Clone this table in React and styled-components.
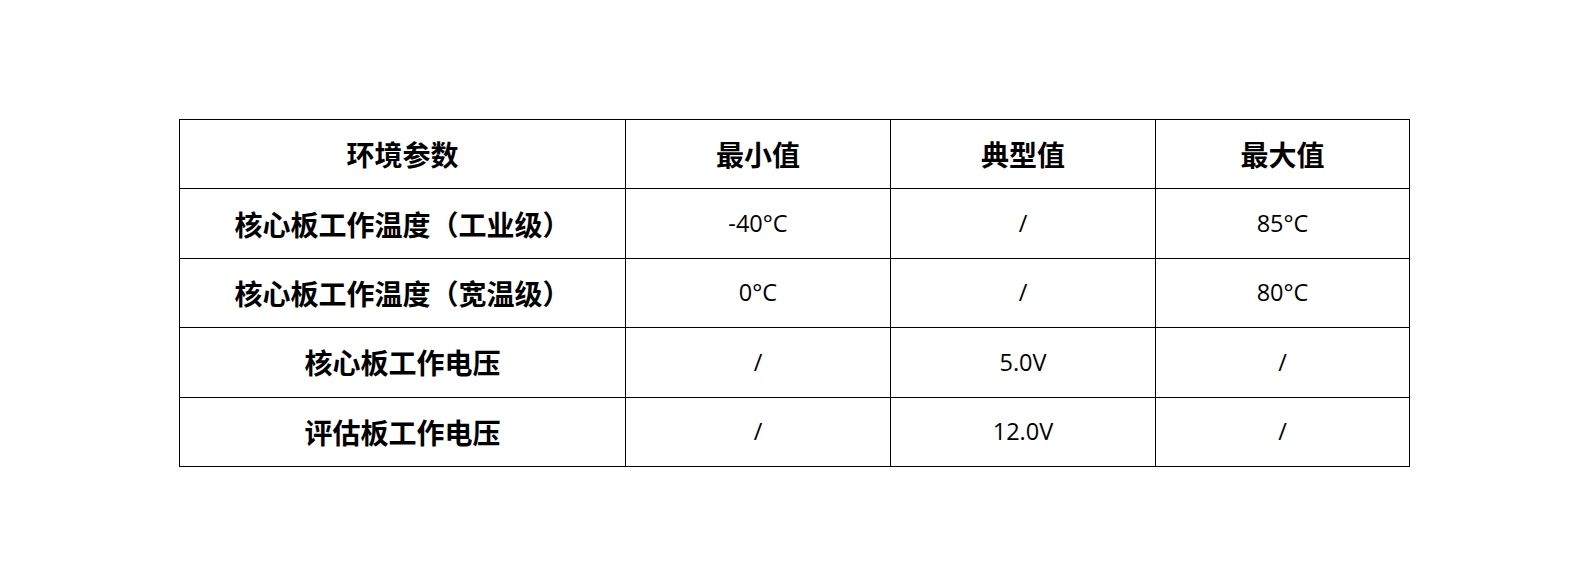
import React from 'react';
import styled, { createGlobalStyle } from 'styled-components';

const GlobalStyle = createGlobalStyle`
  html, body {
    margin: 0;
    padding: 0;
    background: #ffffff;
  }
`;

const Page = styled.div`
  width: 1587px;
  height: 586px;
  padding: 119px 0 0 179px;
  box-sizing: border-box;
  background: #ffffff;
`;

const Table = styled.table`
  border-collapse: collapse;
  table-layout: fixed;
  width: 1230px;
  color: #000;
`;

const Row = styled.tr`
  height: 69.4px;
`;

const Cell = styled.td`
  border: 1px solid #000;
  padding: 0;
  text-align: center;
  vertical-align: middle;
  font-family: ${(p) =>
    p.$cjk
      ? '"Noto Sans CJK SC", "Noto Sans", sans-serif'
      : '"Open Sans", "Liberation Sans", sans-serif'};
  font-size: ${(p) => (p.$cjk ? '28px' : '23.5px')};
  font-weight: ${(p) => (p.$cjk ? 600 : 400)};
  line-height: 1;
`;

const headers = ['环境参数', '最小值', '典型值', '最大值'];

const rows = [
  ['核心板工作温度（工业级）', '-40°C', '/', '85°C'],
  ['核心板工作温度（宽温级）', '0°C', '/', '80°C'],
  ['核心板工作电压', '/', '5.0V', '/'],
  ['评估板工作电压', '/', '12.0V', '/'],
];

const colWidths = [446, 265, 265, 254];

export default function App() {
  return (
    <>
      <GlobalStyle />
      <Page>
        <Table>
          <colgroup>
            {colWidths.map((w, i) => (
              <col key={i} style={{ width: w }} />
            ))}
          </colgroup>
          <tbody>
            <Row>
              {headers.map((h) => (
                <Cell key={h} $cjk>
                  {h}
                </Cell>
              ))}
            </Row>
            {rows.map((r, i) => (
              <Row key={i}>
                {r.map((c, j) => (
                  <Cell key={j} $cjk={j === 0}>
                    {c}
                  </Cell>
                ))}
              </Row>
            ))}
          </tbody>
        </Table>
      </Page>
    </>
  );
}
